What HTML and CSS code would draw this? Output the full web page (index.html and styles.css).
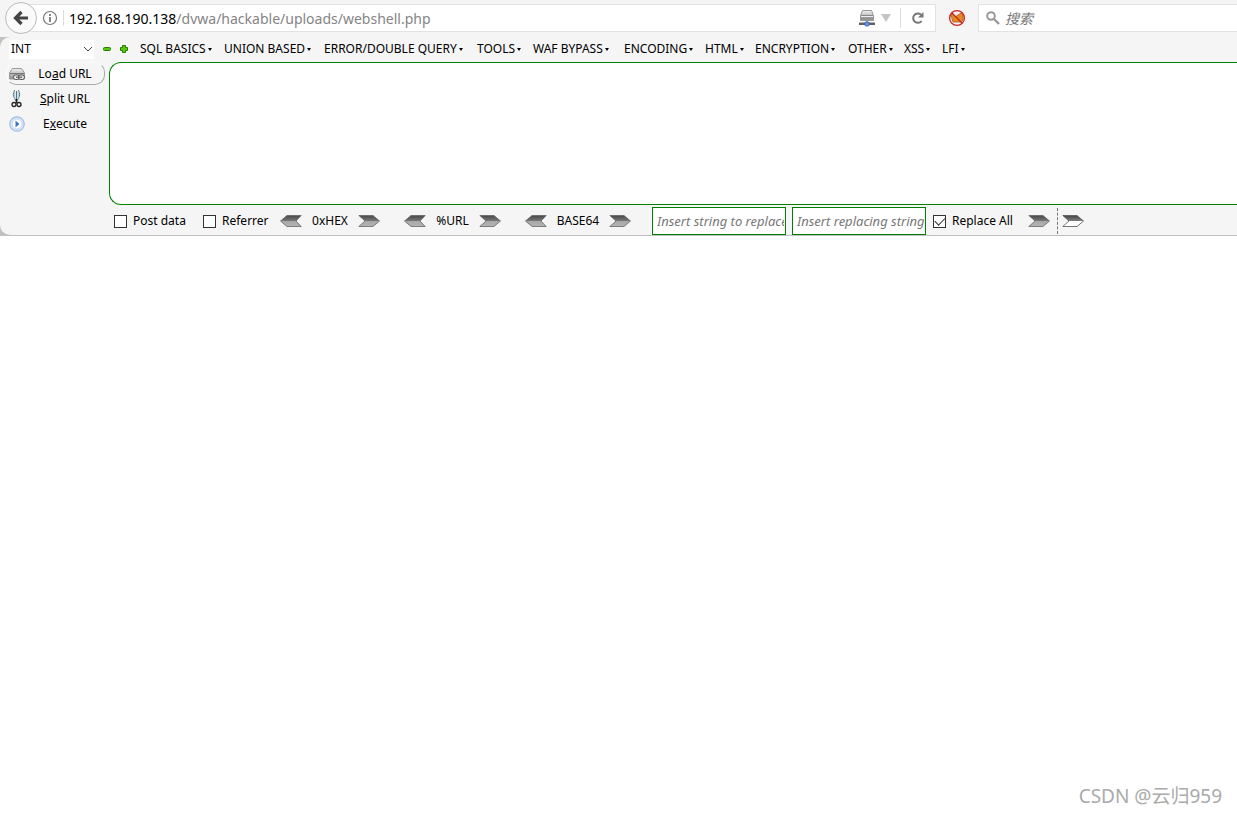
FILE: index.html
```html
<!DOCTYPE html>
<html lang="en">
<head>
<meta charset="utf-8">
<title>webshell.php</title>
<link rel="stylesheet" href="styles.css">
</head>
<body>
<svg class="defs" aria-hidden="true">
  <defs>
    <linearGradient id="steel" x1="0" y1="0" x2="0" y2="1">
      <stop offset="0" stop-color="#484848"/><stop offset=".5" stop-color="#787878"/><stop offset=".52" stop-color="#a8a8a8"/><stop offset="1" stop-color="#b4b4b4"/>
    </linearGradient>
    <linearGradient id="half" x1="0" y1="0" x2="0" y2="1">
      <stop offset="0" stop-color="#444"/><stop offset=".5" stop-color="#808080"/><stop offset=".52" stop-color="#fff"/><stop offset="1" stop-color="#fff"/>
    </linearGradient>
    <linearGradient id="metal" x1="0" y1="0" x2="0" y2="1">
      <stop offset="0" stop-color="#f2f2f2"/><stop offset="1" stop-color="#8c8c8c"/>
    </linearGradient>
    <symbol id="right" viewBox="0 0 22 12"><path d="M.8.5H15L21.5 6 15 11.5H.8L7 6z" fill="url(#steel)" stroke="#666" stroke-width=".8"/></symbol>
    <symbol id="left" viewBox="0 0 22 12"><path d="M21.200.5H7L.5 6 7 11.500H21.200L16 6z" fill="url(#steel)" stroke="#666" stroke-width=".8"/></symbol>
    <symbol id="right-half" viewBox="0 0 22 12"><path d="M.8.5H15L21.500 6 15 11.500H.8L7 6z" fill="url(#half)" stroke="#555" stroke-width=".8"/></symbol>
  </defs>
</svg>

<header class="navbar">
  <button class="back" aria-label="Back"><svg width="16" height="16" viewBox="0 0 16 16"><path d="M8.500 2 2.500 8l6 6M3 8h12" fill="none" stroke="#444" stroke-width="3.200"/></svg></button>
  <div class="address">
    <button class="plain info" aria-label="Site information"><svg width="16" height="16" viewBox="0 0 16 16"><circle cx="8" cy="8" r="6.500" fill="none" stroke="#777" stroke-width="1.200"/><path d="M8 4v2M8 7v5" stroke="#777" stroke-width="1.800"/></svg></button>
    <div class="url" role="textbox" aria-label="Address"><span class="host">192.168.190.138</span>/dvwa/hackable/uploads/webshell.php</div>
    <button class="plain" aria-label="Network"><svg width="18" height="18" viewBox="0 0 18 18"><path d="M4.500 1.500h9l2 5v5h-13v-5z" fill="url(#metal)" stroke="#999"/><path d="M3 6.500h12M3 9h12" stroke="#888"/><path d="M3 7.500h12" stroke="#eee"/><path d="M1 13.500h16v2.500H1z" fill="#606060"/><path d="M9 12v2" stroke="#555"/><rect x="7" y="13" width="4" height="4" rx="1" fill="#6a98ec" stroke="#315bb4" stroke-width=".8"/></svg></button>
    <button class="plain history" aria-label="History"><svg width="12" height="10" viewBox="0 0 12 10"><path d="M1 1h10L6 9z" fill="#c4c4c4"/></svg></button>
    <button class="plain reload" aria-label="Reload"><svg width="14" height="14" viewBox="0 0 14 14"><path d="M10.600 10A4.700 4.700 0 1 1 10 3.600" fill="none" stroke="#777" stroke-width="2"/><path d="M12.500 1v5.500H7z" fill="#777"/></svg></button>
  </div>
  <button class="plain blocker" aria-label="Blocker"><svg width="18" height="18" viewBox="0 0 18 18"><circle cx="9" cy="9" r="7.300" fill="#f3eeee"/><path d="m3 5 3 1 1 2 3-2 3-2 2 2v5l-2 2H5l-1-3z" fill="#e8891e" stroke="#a2632a" stroke-width=".8"/><circle cx="9" cy="9" r="7.400" fill="none" stroke="#cf2424" stroke-width="1.300"/><path d="m4 4 10 10" stroke="#b72e1c" stroke-width="1.300"/></svg></button>
  <label class="search">
    <svg width="14" height="14" viewBox="0 0 14 14"><circle cx="5" cy="5" r="3.800" fill="none" stroke="#999" stroke-width="2"/><path d="m8 8 5 5" stroke="#999" stroke-width="2.400"/></svg>
    <input type="search" placeholder="搜索" aria-label="搜索">
  </label>
</header>

<div class="backdrop">
<section class="hackbar">
  <div class="menubar">
    <div class="chooser">
      <select aria-label="Type"><option>INT</option></select>
      <svg width="10" height="6" viewBox="0 0 10 6"><path d="m1 1 4 4 4-4" fill="none" stroke="#444"/></svg>
    </div>
    <button class="plain step" aria-label="Decrease"><svg width="10" height="10" viewBox="0 0 10 10"><rect x="1.500" y="3.500" width="7" height="3" rx="1" fill="#58c80a" stroke="#247f00"/></svg></button>
    <button class="plain step" aria-label="Increase"><svg width="10" height="10" viewBox="0 0 10 10"><path d="M3.500 1.500h3v2h2v3h-2v2h-3v-2h-2v-3h2z" fill="#58c80a" stroke="#247f00"/></svg></button>
    <nav class="menus">
      <button class="menu">SQL BASICS</button>
      <button class="menu">UNION BASED</button>
      <button class="menu">ERROR/DOUBLE QUERY</button>
      <button class="menu">TOOLS</button>
      <button class="menu">WAF BYPASS</button>
      <button class="menu">ENCODING</button>
      <button class="menu">HTML</button>
      <button class="menu">ENCRYPTION</button>
      <button class="menu">OTHER</button>
      <button class="menu">XSS</button>
      <button class="menu">LFI</button>
    </nav>
  </div>
  <div class="work">
    <div class="actions">
      <button class="action raised"><svg width="18" height="18" viewBox="0 0 18 18"><path d="M4.500 3.500h9l3 4.500v6h-15V8z" fill="url(#metal)" stroke="#999"/><path d="M2 8.500h14" stroke="#777"/><rect x="5.500" y="10" width="6" height="4.500" rx="2" fill="#e8e8e8" stroke="#555"/><rect x="10.500" y="10" width="6" height="4.500" rx="2" fill="#ddd" stroke="#555"/><path d="M8 12.200h6" stroke="#444"/></svg><span>Lo<u>a</u>d URL</span></button>
      <button class="action"><svg width="18" height="18" viewBox="0 0 18 18"><path d="M6.500 0Q4 5 6.500 8.500L8 11M10.500 0Q13 5 10.500 8.500L9 11M8.500 1v10" fill="none" stroke="#56717c"/><path d="M6.800 1.500v6l1 2M10.200 1.500v6l-1 2" fill="none" stroke="#a4cfdf" stroke-width="1.200"/><path d="M8.500 9v4" stroke="#222" stroke-width="1.600"/><circle cx="6" cy="14.500" r="2" fill="none" stroke="#222" stroke-width="1.300"/><circle cx="11" cy="14.500" r="2" fill="none" stroke="#222" stroke-width="1.300"/></svg><span><u>S</u>plit URL</span></button>
      <button class="action"><svg width="18" height="18" viewBox="0 0 18 18"><circle cx="9" cy="9" r="7.200" fill="#dbe8f8" stroke="#a3bde0" stroke-width="1.200"/><circle cx="9" cy="9" r="5" fill="#fff" stroke="#c5d8f1"/><path d="m7.500 5.500 4 3.500-4 3.500z" fill="#3c78c4"/></svg><span>E<u>x</u>ecute</span></button>
    </div>
    <div class="editor">
      <textarea class="query" aria-label="Query"></textarea>
      <div class="tools">
        <label class="check"><input type="checkbox"><span>Post data</span></label>
        <label class="check"><input type="checkbox"><span>Referrer</span></label>
        <div class="codec hex"><button class="plain" aria-label="Decode hex"><svg width="22" height="12"><use href="#left"/></svg></button><span>0xHEX</span><button class="plain" aria-label="Encode hex"><svg width="22" height="12"><use href="#right"/></svg></button></div>
        <div class="codec percent"><button class="plain" aria-label="Decode URL"><svg width="22" height="12"><use href="#left"/></svg></button><span>%URL</span><button class="plain" aria-label="Encode URL"><svg width="22" height="12"><use href="#right"/></svg></button></div>
        <div class="codec base"><button class="plain" aria-label="Decode base64"><svg width="22" height="12"><use href="#left"/></svg></button><span>BASE64</span><button class="plain" aria-label="Encode base64"><svg width="22" height="12"><use href="#right"/></svg></button></div>
        <div class="fields">
          <input class="field" type="text" placeholder="Insert string to replace" aria-label="String to replace">
          <input class="field" type="text" placeholder="Insert replacing string" aria-label="Replacing string">
        </div>
        <label class="check all"><input type="checkbox" checked><span>Replace All</span></label>
        <button class="plain" aria-label="Replace"><svg width="22" height="12"><use href="#right"/></svg></button>
        <span class="divider"></span>
        <button class="plain" aria-label="Replace in selection"><svg width="22" height="12"><use href="#right-half"/></svg></button>
      </div>
    </div>
  </div>
</section>
</div>
<main class="page"><p class="credit">CSDN @云归959</p></main>
</body>
</html>
```

FILE: styles.css
```css
* { box-sizing: border-box; }
body {
  margin: 0;
  min-height: 100vh;
  display: flex;
  flex-direction: column;
  background: #fff;
  color: #000;
  font: 12px/18px "Noto Sans", "Noto Sans CJK SC", sans-serif;
}
button, input, select, textarea { font: inherit; color: inherit; }
svg { display: block; flex: none; }
.defs { position: absolute; width: 0; height: 0; }
.plain { border: 0; padding: 0; background: none; flex: none; }

.navbar { display: flex; align-items: center; height: 37px; padding: 0 0 1px 5px; background: #f5f5f5; }
.back {
  width: 32px; height: 32px; padding: 0;
  display: grid; place-items: center; flex: none;
  border: 1px solid #bbb; border-radius: 50%; background: #fafafa;
  position: relative; z-index: 1;
}
.address {
  flex: 922 1 0; min-width: 0; height: 28px; margin-left: -10px; padding-left: 14px;
  display: flex; align-items: center;
  background: #fff; border: 1px solid #e2e2e2;
}
.info { padding-right: 5px; border-right: 1px solid #ddd; }
.url { flex: 1; min-width: 0; padding: 1px 0 0 5px; font-size: 14px; line-height: 20px; color: #858585; white-space: nowrap; overflow: hidden; }
.host { color: #000; }
.history { margin: 0 8px 0 4px; }
.reload { height: 20px; padding: 0 10px; border-left: 1px solid #ddd; }
.blocker { margin: 0 12px; }
.search {
  flex: 259 1 0; min-width: 0; height: 28px; display: flex; align-items: center; gap: 5px; padding-left: 7px;
  background: #fff; border: 1px solid #e2e2e2; border-right: 0;
}
.search input { flex: 1; min-width: 0; border: 0; padding: 1px 0 0; background: none; font-size: 14px; line-height: 20px; outline: 0; }
.search input::placeholder { color: #777; font-style: italic; opacity: 1; }

.backdrop { background: #c0c0c0; border-bottom: 1px solid #c0c0c0; }
.hackbar { background: #f5f5f5; border-radius: 10px 0 0 10px; }
.menubar { display: flex; align-items: center; height: 25px; padding: 0 0 1px 9px; }
.chooser { display: grid; align-items: center; width: 85px; height: 19px; background: #fff; }
.chooser select, .chooser svg { grid-area: 1 / 1; }
.chooser select { appearance: none; width: 100%; border: 0; padding: 0 2px; background: none; }
.chooser svg { justify-self: end; margin-right: 1px; pointer-events: none; }
.step { margin-left: 8px; }
.step + .step { margin-left: 7px; }
.menus { display: grid; grid-template-columns: 84px 100px 153px 56px 91px 81px 50px 93px 56px 38px auto; margin-left: 11px; }
.menu { display: flex; align-items: center; border: 0; padding: 0; background: none; white-space: nowrap; }
.menu::after { content: ""; border: solid transparent; border-width: 3px 2px 0; border-top-color: #000; margin-left: 2px; }

.work { display: flex; }
.actions { flex: none; width: 109px; display: flex; flex-direction: column; align-items: flex-start; gap: 2px; padding-left: 6px; }
.action { display: flex; align-items: center; width: 99px; height: 23px; padding: 0 5px 0 1px; border: 1px solid transparent; border-radius: 10px; background: none; }
.action span { flex: 1; padding-left: 5px; text-align: center; }
.raised { border-color: #fafafa #aaa #aaa #fff; }
.editor { flex: 1; min-width: 0; }
.query { display: block; width: 100%; height: 143px; border: 1px solid #008000; border-right: 0; border-radius: 12px 0 0 12px; background: #fff; resize: none; outline: 0; padding: 6px 10px; }
.tools { display: flex; align-items: center; height: 30px; padding: 2px 0 0 5px; }
.check { display: flex; align-items: center; gap: 6px; width: 89px; flex: none; white-space: nowrap; }
.check input { appearance: none; width: 13px; height: 13px; margin: 0; border: 1px solid #333; background: #fff; display: grid; place-items: center; flex: none; }
.check input:checked::after { content: ""; width: 9px; height: 5px; border: solid #333; border-width: 0 0 1px 1px; transform: rotate(-45deg); margin-bottom: 3px; }
.check + .check { width: 77px; }
.codec { display: flex; align-items: center; justify-content: space-between; flex: none; }
.hex { width: 100px; }
.percent { width: 97px; margin-left: 24px; }
.base { width: 106px; margin-left: 24px; }
.fields { display: flex; gap: 6px; margin-left: 21px; }
.field { width: 134px; height: 28px; border: 1px solid #008000; padding: 0 1px 0 4px; background: #fff; outline: 0; font-size: 13px; }
.field::placeholder { color: #777; font-style: italic; opacity: 1; }
.all { margin-left: 7px; width: 95px; }
.divider { height: 26px; margin: 0 4px 0 7px; border-left: 1px dashed #777; }

.page { flex: 1; display: flex; align-items: flex-end; justify-content: flex-end; padding: 0 15px 6px; background: #fff; }
.credit { margin: 0; font-size: 19px; line-height: 24px; color: #aaa; }
```
